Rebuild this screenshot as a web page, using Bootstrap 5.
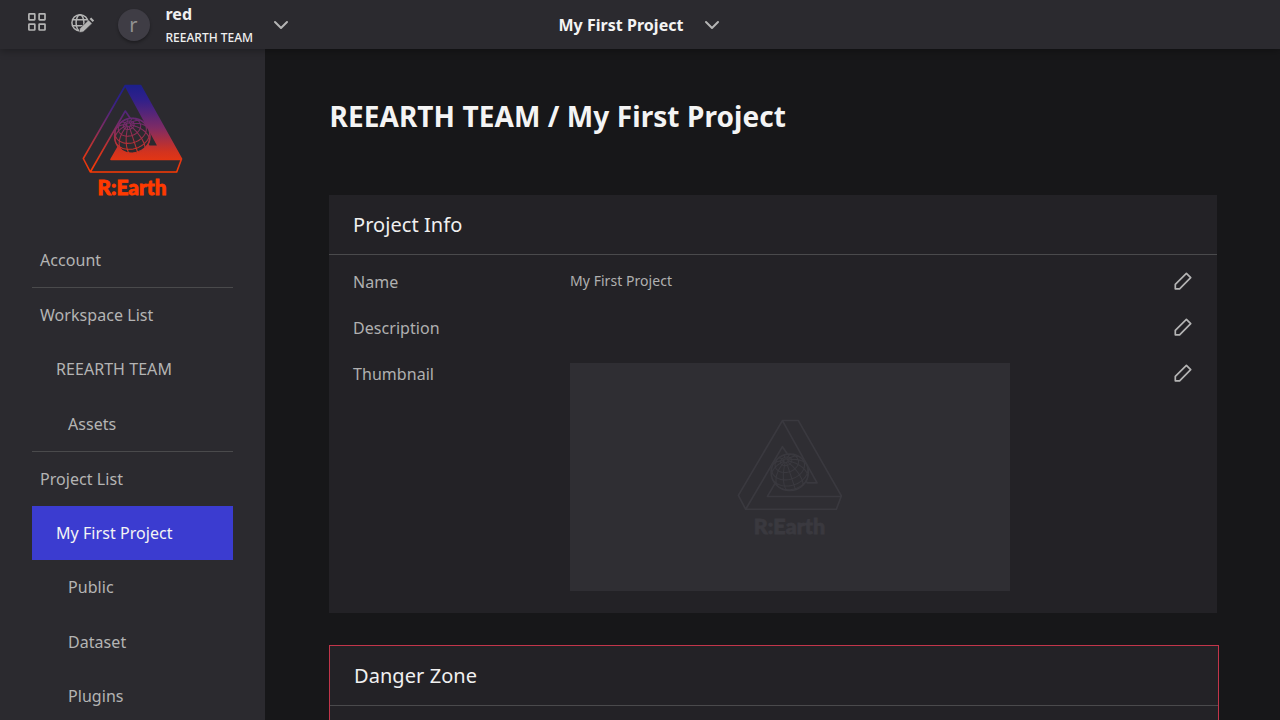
<!DOCTYPE html>
<html lang="en">
<head>
<meta charset="utf-8">
<meta name="viewport" content="width=device-width, initial-scale=1">
<title>My First Project - Settings</title>
<link href="https://cdn.jsdelivr.net/npm/bootstrap@5.3.0/dist/css/bootstrap.min.css" rel="stylesheet">
<style>
body{font-family:"Noto Sans",sans-serif;background:#171719;color:#b0b0b0;height:100vh;overflow:hidden}
svg{display:block;flex-shrink:0}
.topbar{height:49px;background:#2b2a2f;padding:0 28px;box-shadow:0 2px 8px rgba(0,0,0,.3);z-index:2}
.stroke-icon{fill:none;stroke:#b4b4b4;stroke-width:1.7;stroke-linejoin:round;stroke-linecap:round}
.header-left{width:530.5px}
.avatar{width:32px;height:32px;background:#3f3d45;color:#929292;font-size:20px;line-height:32px;box-shadow:0 2px 3px rgba(0,0,0,.3);margin:0 16px 0 22.5px}
.user-block{width:107.5px;margin-top:2px}
.user-name{font-size:16px;font-weight:700;line-height:23px;color:#f0f0f0}
.team-name{font-size:12px;font-weight:500;line-height:23px;color:#f0f0f0}
.project-name{font-size:16px;font-weight:700;color:#f4f4f4;width:145px;letter-spacing:.03px}
.workspace{min-height:0}
.sidebar{width:265px;background:#2b2a2f;padding:0 32px}
.brand-box{height:183.75px;padding:35px 0 0 48px}
.side-link{height:54.25px;line-height:54.25px;font-size:16px;color:#b4b4b4;padding-left:8px;text-decoration:none;display:block;letter-spacing:.05px}
.lv1{padding-left:24px}
.lv2{padding-left:36px}
.side-link.active{background:#3b3cd0;color:#f4f4f4}
.rule{height:1px;background:#4a4a4c}
.page{padding:49px 63px 0 64px}
.page h1{font-size:28px;font-weight:700;line-height:36px;color:#f4f4f4;margin:0 0 61px .5px;letter-spacing:.08px}
.panel{background:#232226}
.panel-head{height:60px;line-height:60px;padding-left:24px;font-size:20px;color:#f0f0f0;border-bottom:1px solid #4a4a4c;letter-spacing:.06px}
.panel-body{padding:15px 25.5px 21px 24px;height:357.5px}
.prop{height:46.2px;line-height:24px;letter-spacing:.05px}
.prop-label{width:217px;font-size:16px}
.prop-value{font-size:14px;line-height:22px}
.prop svg{margin:2px 0 0 auto}
.thumb{width:440px;height:228px;background:#2f2e33;margin-top:1px;padding:56px 0 0 167px}
.danger{border:1px solid #c2354a;margin:32px -2px 0 0;height:300px}
.mark-line{fill:none;stroke:var(--ink);stroke-width:1.6;stroke-linejoin:round}
.globe-disc{fill:var(--ground);stroke:var(--ink);stroke-width:1.4}
.globe-grid{fill:none;stroke:var(--ink);stroke-width:1.05}
.wordmark{fill:var(--word);stroke:var(--word);stroke-width:.8;font:900 20px Lato,sans-serif}
.brand{--ink:url(#flame);--ground:#2b2a2f;--word:#ff3a00}
.ghost{--ink:#3a393f;--ground:#2f2e33;--word:#3a393f}
</style>
</head>
<body class="d-flex flex-column">
<svg width="0" height="0" class="position-absolute" aria-hidden="true">
<defs>
<linearGradient id="flame" gradientUnits="userSpaceOnUse" x1="0" y1="1" x2="0" y2="90">
<stop offset="0" stop-color="#1c1f8a"/><stop offset=".17" stop-color="#31208a"/><stop offset=".48" stop-color="#7e2b65"/><stop offset=".75" stop-color="#d2331f"/><stop offset="1" stop-color="#ff3a00"/>
</linearGradient>
<g id="triangle">
<path class="mark-line" d="M43.3 1.5H58.5L99.5 75 94.7 88H8.3L1.3 74.5ZM8.3 88 43.3 27 67 62.3H76.3L43.3 1.5M99.5 75.5H29L46 46"/>
</g>
<g id="globe"><circle class="globe-disc" cx="50.3" cy="52" r="17.8"/><path id="grid" class="globe-grid"/></g>
<symbol id="pencil" viewBox="0 0 18 18"><path class="stroke-icon" d="M1.3 16.8V12.4L12.4 1.3 16.7 5.6 5.6 16.8Z"/></symbol>
<symbol id="chevron" viewBox="0 0 16 10"><path class="stroke-icon" d="M2 2 8 8 14 2" style="stroke-width:2"/></symbol>
</defs>
</svg>
<header class="topbar d-flex align-items-center flex-shrink-0 position-relative">
<div class="header-left d-flex align-items-center">
<svg class="stroke-icon mb-1" width="18" height="20" viewBox="0 0 18 20"><rect x=".9" y=".9" width="5.9" height="5.9" rx=".5"/><rect x="11.1" y=".9" width="5.9" height="5.9" rx=".5"/><rect x=".9" y="11.1" width="5.9" height="5.9" rx=".5"/><rect x="11.1" y="11.1" width="5.9" height="5.9" rx=".5"/></svg>
<svg class="ms-4 mb-1" width="25" height="20" viewBox="0 0 25 20"><g class="stroke-icon" style="stroke-width:1.5"><circle cx="10" cy="9.8" r="8.1"/><ellipse cx="10" cy="9.8" rx="3.9" ry="8.1"/><path d="M2.5 6.8H17.5M2.5 12.8H17.5"/></g><path d="M9.2 19.6 9.8 15.4 18.6 6.9 22.2 10.4 13.2 18.9Z" fill="#b4b4b4" stroke="#2b2a2f" stroke-width=".6"/><path d="m19.6 6 1.6-1.5 2.9 2.9-1.5 1.6Z" fill="#b4b4b4"/></svg>
<div class="avatar rounded-circle text-center">r</div>
<div class="user-block"><div class="user-name">red</div><div class="team-name">REEARTH TEAM</div></div>
<svg width="16" height="10"><use href="#chevron"/></svg>
</div>
<div class="project-name">My First Project</div>
<svg width="16" height="10"><use href="#chevron"/></svg>
</header>
<div class="workspace d-flex flex-grow-1 overflow-hidden">
<aside class="sidebar flex-shrink-0">
<div class="brand-box"><svg class="brand" style="margin-left:2px" width="102" height="116" viewBox="0 0 102 116" role="img" aria-label="R:Earth">
<path fill="url(#flame)" d="M43.3 1.5H58.5L99.5 75.5H29L46 46 67 62.3H76.3Z"/>
<use href="#triangle"/><use href="#globe"/><text class="wordmark" x="15.5" y="111.3" textLength="69" lengthAdjust="spacingAndGlyphs">R:Earth</text></svg></div>
<nav>
<a class="side-link" href="#">Account</a>
<div class="rule"></div>
<a class="side-link" href="#">Workspace List</a>
<a class="side-link lv1" href="#">REEARTH TEAM</a>
<a class="side-link lv2" href="#">Assets</a>
<div class="rule"></div>
<a class="side-link" href="#">Project List</a>
<a class="side-link lv1 active" href="#">My First Project</a>
<a class="side-link lv2" href="#">Public</a>
<a class="side-link lv2" href="#">Dataset</a>
<a class="side-link lv2" href="#">Plugins</a>
</nav>
</aside>
<main class="page flex-grow-1">
<h1>REEARTH TEAM / My First Project</h1>
<section class="panel">
<div class="panel-head">Project Info</div>
<div class="panel-body">
<div class="prop d-flex align-items-start"><div class="prop-label">Name</div><div class="prop-value">My First Project</div><svg width="18" height="18"><use href="#pencil"/></svg></div>
<div class="prop d-flex align-items-start"><div class="prop-label">Description</div><svg width="18" height="18"><use href="#pencil"/></svg></div>
<div class="prop d-flex align-items-start"><div class="prop-label">Thumbnail</div>
<div style="height:0"><div class="thumb"><svg class="ghost m-0" width="107" height="119" viewBox="0 0 102 116" preserveAspectRatio="none"><use href="#triangle"/><use href="#globe"/><text class="wordmark" x="16" y="111.7" textLength="68" lengthAdjust="spacingAndGlyphs">R:Earth</text></svg></div></div>
<svg width="18" height="18"><use href="#pencil"/></svg></div>
</div>
</section>
<section class="panel danger"><div class="panel-head">Danger Zone</div></section>
</main>
</div>
<script src="https://cdn.jsdelivr.net/npm/bootstrap@5.3.0/dist/js/bootstrap.bundle.min.js"></script>
<script>
// Orthographic graticule for the logo globe, seen from above with a slight lean.
const rad = Math.PI / 180, R = 17.8, tilt = 48 * rad, lean = -18 * rad;
function project(lat, lon) {
  const x = Math.cos(lat * rad) * Math.sin(lon * rad);
  const c = Math.cos(lat * rad) * Math.cos(lon * rad), s = Math.sin(lat * rad);
  const y = -(Math.cos(tilt) * s - Math.sin(tilt) * c);
  const z = Math.sin(tilt) * s + Math.cos(tilt) * c;
  return [50.3 + R * (x * Math.cos(lean) - y * Math.sin(lean)), 52 + R * (x * Math.sin(lean) + y * Math.cos(lean)), z];
}
function trace(points) {
  let d = '', pen = false;
  for (const [x, y, z] of points) {
    if (z < 0) { pen = false; continue; }
    d += (pen ? 'L' : 'M') + x.toFixed(2) + ' ' + y.toFixed(2);
    pen = true;
  }
  return d;
}
let d = '';
for (let lon = 0; lon < 360; lon += 30) d += trace(Array.from({length: 36}, (_, i) => project(-90 + i * 5, lon)));
for (const lat of [-22, 2, 26, 50, 72]) d += trace(Array.from({length: 73}, (_, i) => project(lat, i * 5)));
document.getElementById('grid').setAttribute('d', d);
</script>
</body>
</html>
